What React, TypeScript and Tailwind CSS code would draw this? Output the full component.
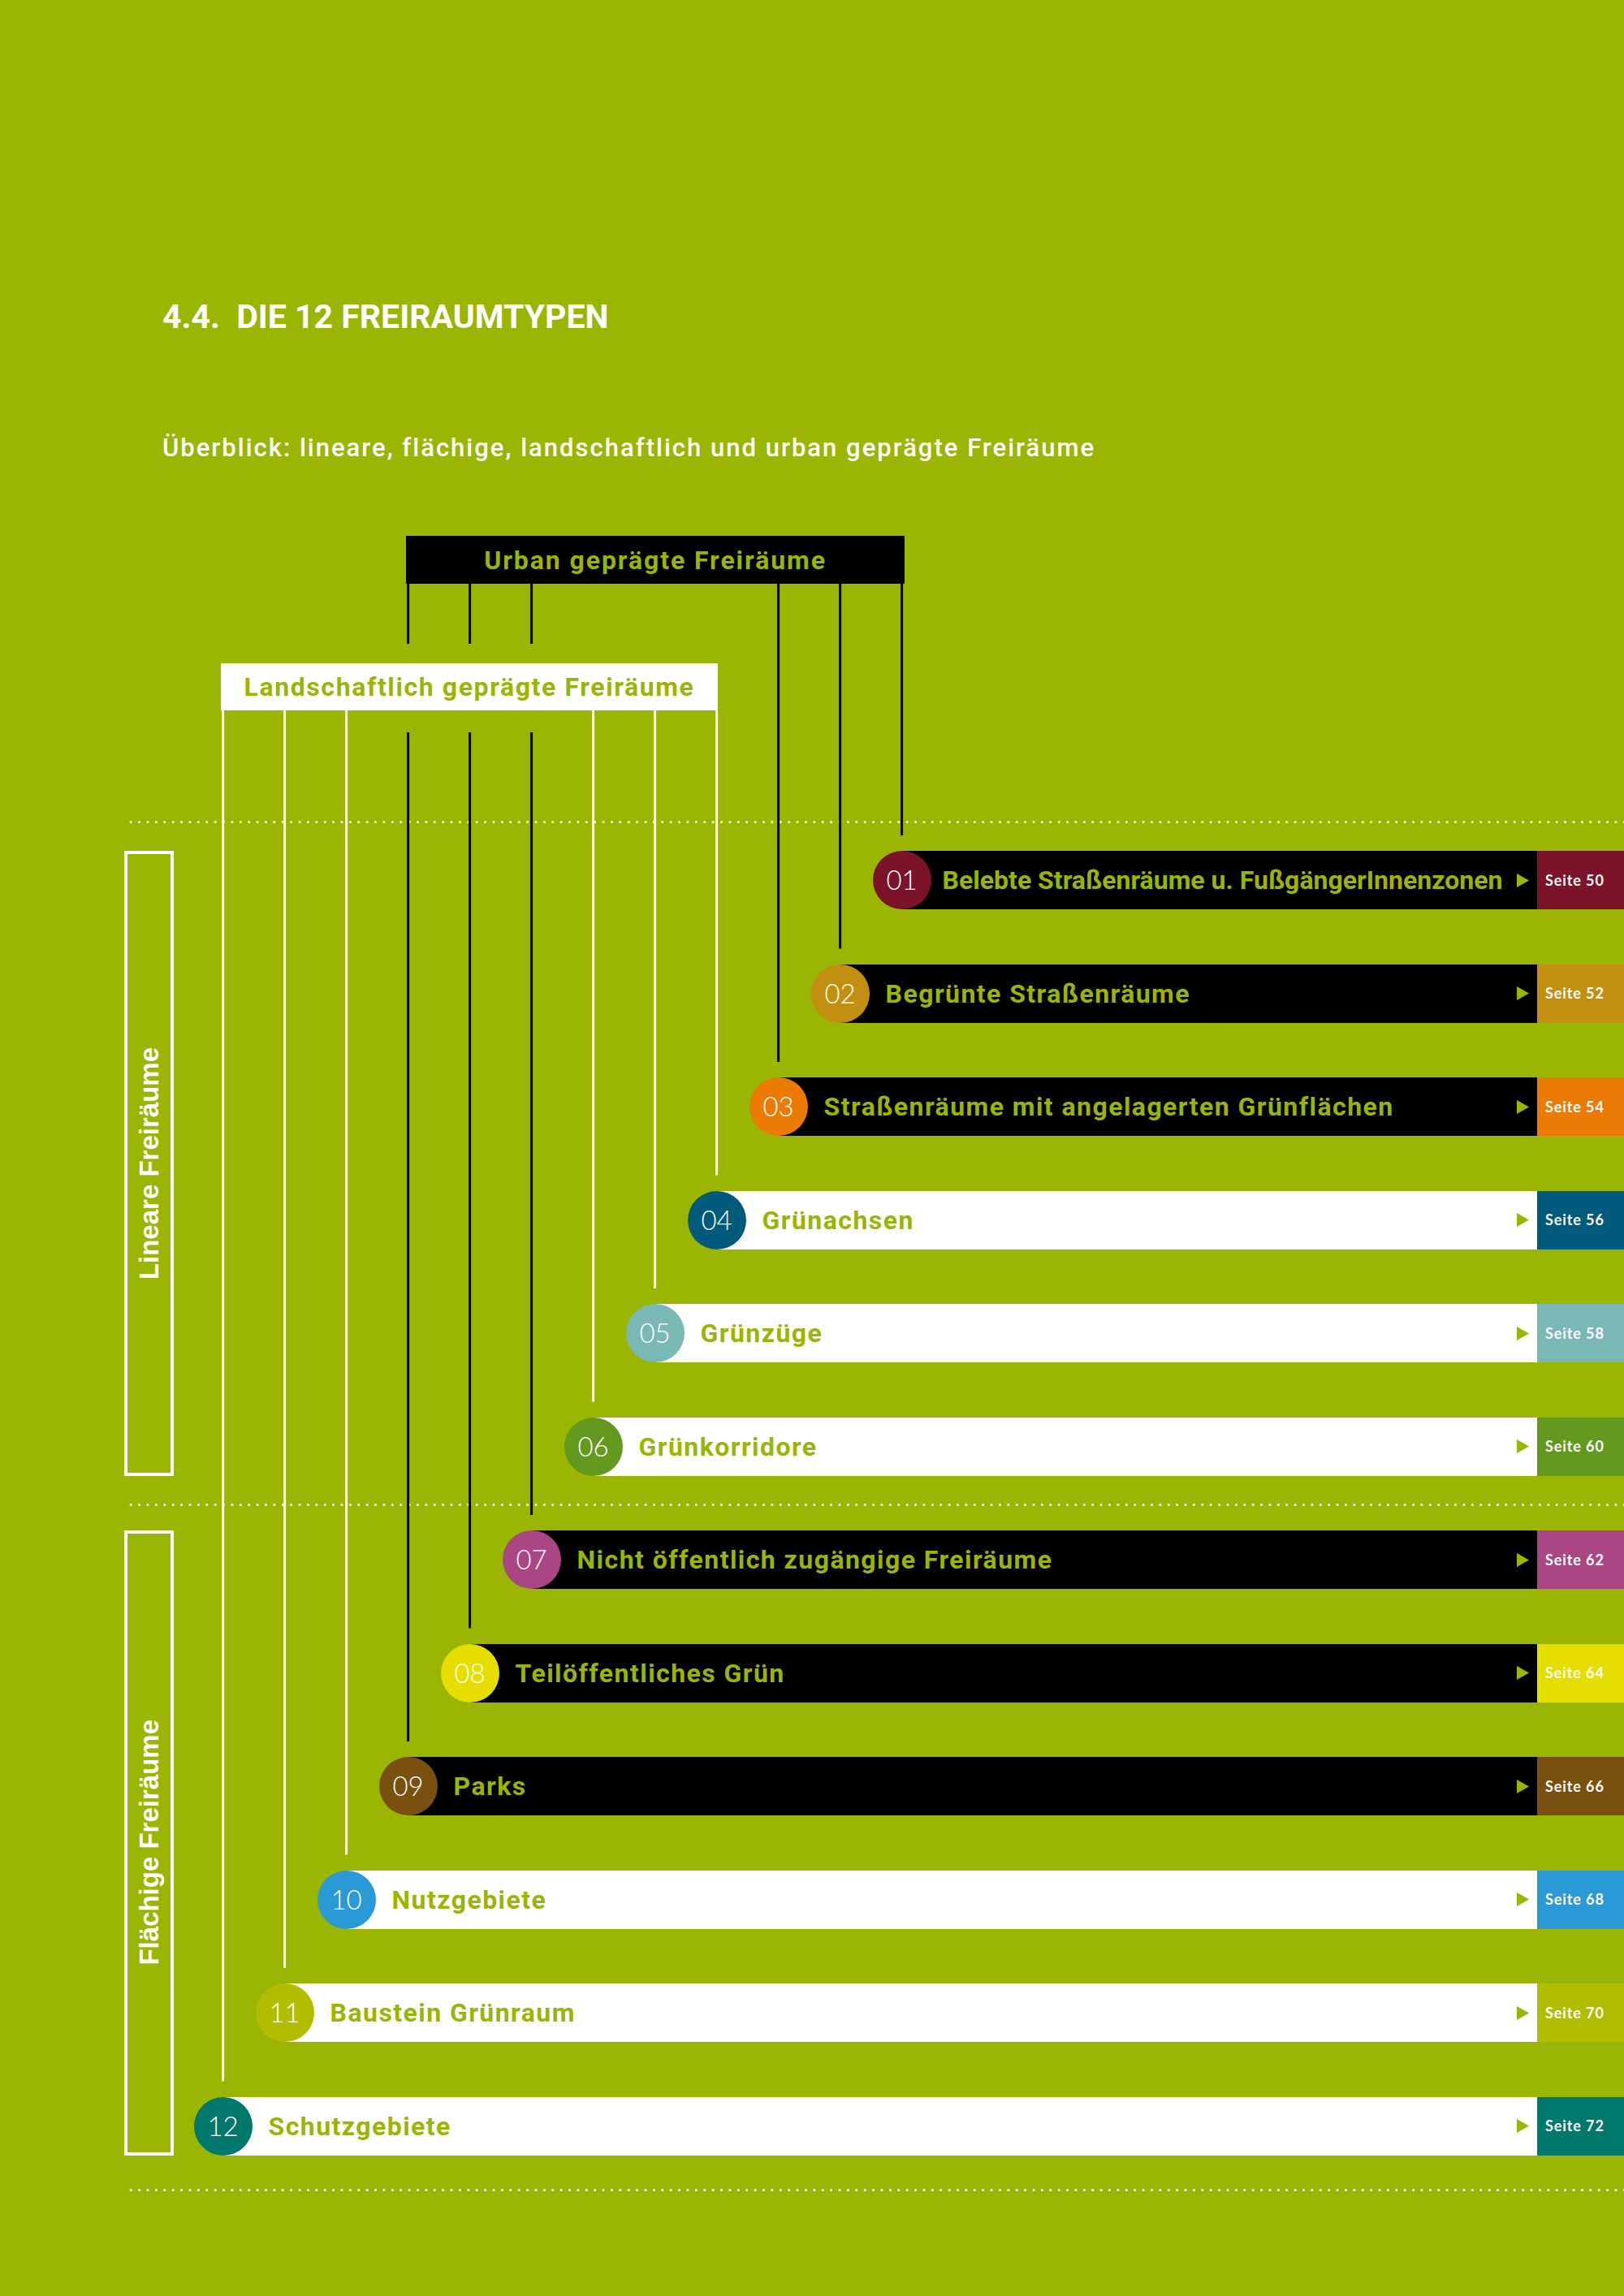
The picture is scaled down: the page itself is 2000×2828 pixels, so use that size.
import React from "react";

const GREEN = "text-[#9ab504]";

type Row = {
  n: number;
  title: string;
  page: number;
  dot: string;
  dark: boolean;
};

const rows: Row[] = [
  { n: 1, title: "Belebte Straßenräume u. FußgängerInnenzonen", page: 50, dot: "bg-[#7b1428]", dark: true },
  { n: 2, title: "Begrünte Straßenräume", page: 52, dot: "bg-[#c38f10]", dark: true },
  { n: 3, title: "Straßenräume mit angelagerten Grünflächen", page: 54, dot: "bg-[#ec7b06]", dark: true },
  { n: 4, title: "Grünachsen", page: 56, dot: "bg-[#005a7c]", dark: false },
  { n: 5, title: "Grünzüge", page: 58, dot: "bg-[#7ab8b6]", dark: false },
  { n: 6, title: "Grünkorridore", page: 60, dot: "bg-[#63991f]", dark: false },
  { n: 7, title: "Nicht öffentlich zugängige Freiräume", page: 62, dot: "bg-[#ab4685]", dark: true },
  { n: 8, title: "Teilöffentliches Grün", page: 64, dot: "bg-[#e6de00]", dark: true },
  { n: 9, title: "Parks", page: 66, dot: "bg-[#7a5011]", dark: true },
  { n: 10, title: "Nutzgebiete", page: 68, dot: "bg-[#2a9ad6]", dark: false },
  { n: 11, title: "Baustein Grünraum", page: 70, dot: "bg-[#b1bd00]", dark: false },
  { n: 12, title: "Schutzgebiete", page: 72, dot: "bg-[#00786c]", dark: false },
];

// circle centre x of row n, row top y of row n (page coordinates)
const cx = (n: number) => 274.6 + 76 * (12 - n);
const rowTop = (n: number) => 1048 + 139.5 * (n - 1);

function Dots({ className = "" }: { className?: string }) {
  return (
    <div
      className={`ml-[3px] h-[3px] bg-[radial-gradient(circle,rgba(255,255,255,0.95)_1.2px,transparent_1.7px)] bg-[length:10.4px_3px] ${className}`}
    />
  );
}

function Arrow() {
  return (
    <svg width="15" height="17" viewBox="0 0 15 17" className="ml-auto mr-[10px] shrink-0">
      <path d="M0 0 L15 8.5 L0 17 Z" fill="#9ab504" />
    </svg>
  );
}

function RowItem({ row }: { row: Row }) {
  // the first title is long and set tighter in the original
  const tight = row.n === 1;
  return (
    <div className="flex h-[72px]" style={{ marginLeft: cx(row.n) - 36 - 214 }}>
      <div
        className={`relative z-10 flex h-[72px] w-[72px] shrink-0 items-center justify-center rounded-full font-['Lato',sans-serif] text-[33px] font-light text-white ${row.dot}`}
      >
        {String(row.n).padStart(2, "0")}
      </div>
      <div
        className={`-ml-[36px] flex flex-1 items-center ${tight ? "pl-[50px]" : "pl-[56px]"} ${row.dark ? "bg-black" : "bg-white"}`}
      >
        <span
          className={`text-[32px] font-bold whitespace-nowrap ${tight ? "tracking-normal" : "tracking-[0.045em]"} ${GREEN}`}
        >
          {row.title}
        </span>
        <Arrow />
      </div>
      <div
        className={`flex w-[107px] shrink-0 items-center pl-[10px] font-['Lato',sans-serif] text-[18px] font-bold tracking-[0.05em] text-white ${row.dot}`}
      >
        Seite {row.page}
      </div>
    </div>
  );
}

function Group({ label, items, className = "" }: { label: string; items: Row[]; className?: string }) {
  return (
    <div className={`flex ${className}`}>
      <div className="flex w-[61px] shrink-0 items-center justify-center border-4 border-white">
        <span className="rotate-180 font-['Liberation_Sans',Arial,sans-serif] text-[33px] font-bold whitespace-nowrap text-white [writing-mode:vertical-rl]">
          {label}
        </span>
      </div>
      <div className="flex flex-1 flex-col gap-[67.5px]">
        {items.map((r) => (
          <RowItem key={r.n} row={r} />
        ))}
      </div>
    </div>
  );
}

function Connectors() {
  const lines: { x: number; y1: number; y2: number; color: string }[] = [];
  [1, 2, 3].forEach((n) => lines.push({ x: cx(n), y1: 719, y2: rowTop(n) - 19, color: "#000" }));
  [7, 8, 9].forEach((n) => {
    lines.push({ x: cx(n), y1: 719, y2: 793, color: "#000" });
    lines.push({ x: cx(n), y1: 902, y2: rowTop(n) - 19, color: "#000" });
  });
  [4, 5, 6, 10, 11, 12].forEach((n) => lines.push({ x: cx(n), y1: 875, y2: rowTop(n) - 19, color: "#fff" }));
  return (
    <svg className="pointer-events-none absolute left-0 top-0" width="2000" height="2828">
      {lines.map((l, i) => (
        <rect key={i} x={l.x - 1.5} y={l.y1} width="3" height={l.y2 - l.y1} fill={l.color} />
      ))}
    </svg>
  );
}

export default function App() {
  return (
    <div className="relative h-[2828px] w-[2000px] overflow-hidden bg-[#9ab504] pt-[360px] font-['Roboto',sans-serif]">
      <h1 className="ml-[200px] h-[60px] text-[41px] leading-[60px] font-bold whitespace-pre text-white">
        4.4.  DIE 12 FREIRAUMTYPEN
      </h1>
      <p className="ml-[200px] mt-[102px] h-[60px] text-[31px] leading-[60px] font-medium tracking-[0.065em] text-white">
        Überblick: lineare, flächige, landschaftlich und urban geprägte Freiräume
      </p>

      <div
        className={`ml-[500px] mt-[78px] flex h-[59px] w-[614px] items-center justify-center bg-black text-[32px] font-bold tracking-[0.06em] ${GREEN}`}
      >
        Urban geprägte Freiräume
      </div>
      <div
        className={`ml-[272px] mt-[98px] flex h-[58px] w-[612px] items-center justify-center bg-white text-[32px] font-bold tracking-[0.05em] ${GREEN}`}
      >
        Landschaftlich geprägte Freiräume
      </div>

      <div className="mt-[136px] pl-[153px]">
        <Dots />
        <Group label="Lineare Freiräume" items={rows.slice(0, 6)} className="mt-[34px]" />
        <Dots className="mt-[34.5px]" />
        <Group label="Flächige Freiräume" items={rows.slice(6)} className="mt-[30px]" />
        <Dots className="mt-[41px]" />
      </div>

      <Connectors />
    </div>
  );
}
